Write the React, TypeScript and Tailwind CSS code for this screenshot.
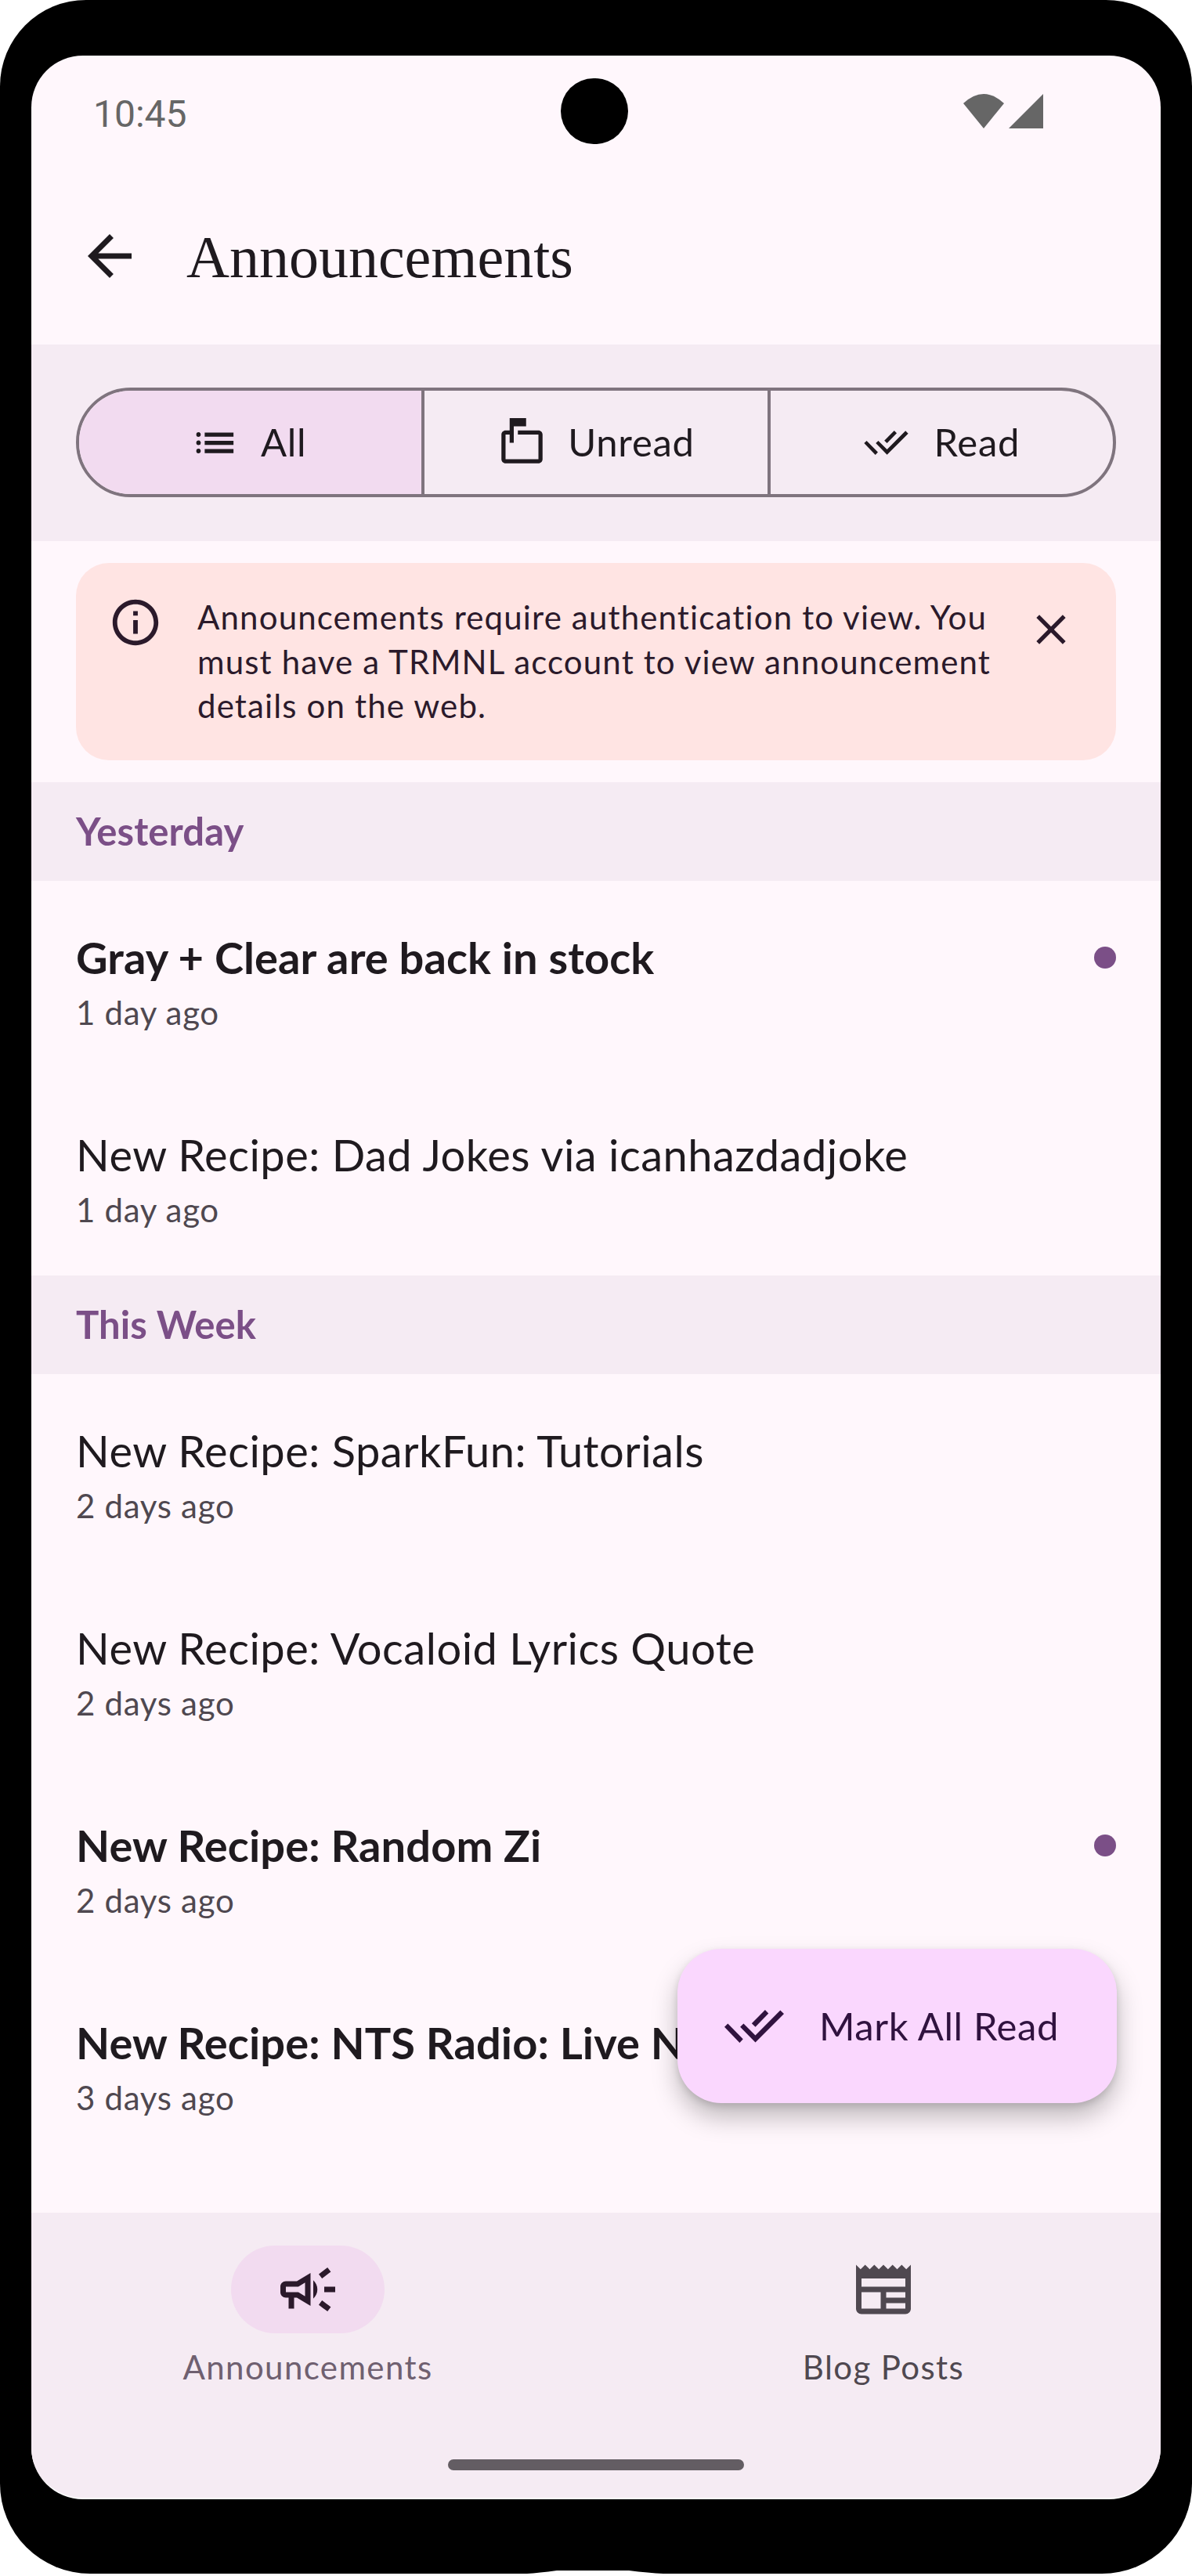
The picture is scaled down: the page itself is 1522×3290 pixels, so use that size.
import React from 'react';

const paths = {
  back: 'M20 11H7.83l5.59-5.59L12 4l-8 8 8 8 1.41-1.41L7.83 13H20v-2z',
  mailbox:
    'M20 6H10v2h10v12H4V8h2v4h2V4h6V0H6v6H4c-1.1 0-2 .9-2 2v12c0 1.1.9 2 2 2h16c1.1 0 2-.9 2-2V8c0-1.1-.9-2-2-2z',
  info: 'M11 7h2v2h-2zm0 4h2v6h-2zm1-9C6.48 2 2 6.48 2 12s4.48 10 10 10 10-4.48 10-10S17.52 2 12 2zm0 18c-4.41 0-8-3.59-8-8s3.59-8 8-8 8 3.59 8 8-3.59 8-8 8z',
  close:
    'M19 6.41L17.59 5 12 10.59 6.41 5 5 6.41 10.59 12 5 17.59 6.41 19 12 13.41 17.59 19 19 17.59 13.41 12z',
  campaign:
    'M18 11v2h4v-2h-4zm-2 6.61c.96.71 2.21 1.65 3.2 2.39.4-.53.8-1.07 1.2-1.6-.99-.74-2.24-1.68-3.2-2.4-.4.54-.8 1.08-1.2 1.61zM20.4 5.6c-.4-.53-.8-1.07-1.2-1.6-.99.74-2.24 1.68-3.2 2.4.4.53.8 1.07 1.2 1.6.96-.72 2.21-1.65 3.2-2.4zM4 9c-1.1 0-2 .9-2 2v2c0 1.1.9 2 2 2h1v4h2v-4h1l5 3V6L8 9H4zm5.03 1.71L11 9.53v4.94l-1.97-1.18-.48-.29H4v-2h4.55l.48-.29zM15.5 12c0-1.33-.58-2.53-1.5-3.35v6.69c.92-.81 1.5-2.01 1.5-3.34z',
  newspaper:
    'M22 3l-1.67 1.67L18.67 3 17 4.67 15.33 3l-1.66 1.67L12 3l-1.67 1.67L8.67 3 7 4.67 5.33 3 3.67 4.67 2 3v16c0 1.1.9 2 2 2h16c1.1 0 2-.9 2-2V3zM11 19H4v-6h7v6zm9 0h-7v-2h7v2zm0-4h-7v-2h7v2zm0-4H4V8h16v3z',
};

function Icon({ d, className }: { d: string; className: string }) {
  return (
    <svg viewBox="0 0 24 24" fill="currentColor" className={className}>
      <path d={d} />
    </svg>
  );
}

function ListIcon({ className }: { className: string }) {
  return (
    <svg viewBox="0 0 24 24" fill="currentColor" className={className}>
      <circle cx="4" cy="8" r="1.1" />
      <circle cx="4" cy="12" r="1.1" />
      <circle cx="4" cy="16" r="1.1" />
      <path d="M7 7h14v2H7zM7 11h14v2H7zM7 15h14v2H7z" />
    </svg>
  );
}

function DoneAll({ className }: { className: string }) {
  return (
    <svg viewBox="72 81 227 125" fill="currentColor" className={className}>
      <path d="M85 133L143 192L130 206L72 146Z" />
      <path d="M145 133L190 178L285 82L299 96L190 205L132 146Z" />
      <path d="M227 81L240 94L190 146L176 132Z" />
    </svg>
  );
}

function SectionHeader({ label }: { label: string }) {
  return (
    <div className="flex h-[126px] items-center bg-[#f5ebf3] pl-[57px] text-[49px] font-bold tracking-[0.1px] text-[#7b4f87]">
      {label}
    </div>
  );
}

function ListRow({ title, age, unread }: { title: string; age: string; unread?: boolean }) {
  return (
    <div className="flex h-[252px] items-start justify-between px-[57px] pt-[67px]">
      <div>
        <div
          className={`text-[56px] leading-[62px] whitespace-nowrap text-[#1f1a1f] ${
            unread ? 'font-bold tracking-[0.1px]' : 'tracking-[0.5px]'
          }`}
        >
          {title}
        </div>
        <div className="mt-[10px] text-[42px] leading-[58px] tracking-[0.7px] text-[#4f4850]">{age}</div>
      </div>
      {unread && <div className="mt-[17px] h-[28px] w-[28px] shrink-0 rounded-full bg-[#7b4f87]" />}
    </div>
  );
}

export default function App() {
  return (
    <div className="relative h-[3290px] w-[1522px] bg-white font-[Lato,sans-serif]">
      <div className="h-[3287px] rounded-t-[110px] rounded-b-[115px] bg-black px-[40px] pt-[71px]">
        <div className="flex h-[3121px] flex-col overflow-hidden rounded-[66px] border-b-2 border-white bg-[#fff7fc]">
          {/* status bar */}
          <div className="relative flex h-[179px] shrink-0 items-start justify-between pt-[51px] pr-[150px] pl-[79px]">
            <span className="font-[Roboto,sans-serif] text-[48px] leading-[48px] text-[#666666]">10:45</span>
            <div className="absolute top-[29px] left-[676px] h-[84px] w-[86px] rounded-full bg-black" />
            <svg viewBox="0 0 102 44" fill="#666666" className="-mt-[2px] h-[44px] w-[102px]">
              <path d="M0 12 Q26 -12 52 12 L26 44 Z" />
              <path d="M58 44 L102 0 V44 Z" />
            </svg>
          </div>

          {/* title row */}
          <div className="flex h-[190px] shrink-0 items-start pt-[35px] pl-[58px]">
            <Icon d={paths.back} className="h-[84px] w-[84px] text-[#1f1a1f]" />
            <h1 className="mt-[1px] ml-[56px] font-['Liberation_Serif',serif] text-[76px] leading-[84px] font-normal text-[#1f1a1f]">
              Announcements
            </h1>
          </div>

          {/* filter */}
          <div className="flex h-[251px] shrink-0 items-start bg-[#f5ebf3] px-[57px] pt-[55px]">
            <div className="flex h-[140px] w-full overflow-hidden rounded-full border-4 border-[#7f747e] text-[49px] tracking-[0.7px] text-[#1f1a1f]">
              <div className="flex flex-1 items-center justify-center gap-[27px] border-r-4 border-[#7f747e] bg-[#f2dbf0]">
                <ListIcon className="h-[63px] w-[63px]" />
                <span className="mr-[5px]">All</span>
              </div>
              <div className="flex flex-1 items-center justify-center gap-[27px] border-r-4 border-[#7f747e]">
                <Icon d={paths.mailbox} className="h-[63px] w-[63px]" />
                Unread
              </div>
              <div className="flex flex-1 items-center justify-center gap-[33px]">
                <DoneAll className="h-[31px] w-[57px]" />
                Read
              </div>
            </div>
          </div>

          {/* auth banner */}
          <div className="shrink-0 px-[57px] py-[28px]">
            <div className="flex h-[252px] items-start rounded-[42px] bg-[#ffe4e3] pt-[41px] pl-[41px] text-[#2b1a2b]">
              <Icon d={paths.info} className="h-[70px] w-[70px] shrink-0" />
              <p className="ml-[44px] w-[1040px] text-[42px] leading-[56.5px] tracking-[1.15px]">
                Announcements require authentication to view. You must have a TRMNL account to view announcement details on the web.
              </p>
              <Icon d={paths.close} className="mt-[12px] ml-[18px] h-[64px] w-[64px] shrink-0" />
            </div>
          </div>

          {/* list */}
          <div className="relative flex-1">
            <SectionHeader label="Yesterday" />
            <ListRow title="Gray + Clear are back in stock" age="1 day ago" unread />
            <ListRow title="New Recipe: Dad Jokes via icanhazdadjoke" age="1 day ago" />
            <SectionHeader label="This Week" />
            <ListRow title="New Recipe: SparkFun: Tutorials" age="2 days ago" />
            <ListRow title="New Recipe: Vocaloid Lyrics Quote" age="2 days ago" />
            <ListRow title="New Recipe: Random Zi" age="2 days ago" unread />
            <ListRow title="New Recipe: NTS Radio: Live N" age="3 days ago" unread />

            <div className="absolute right-[56px] bottom-[140px] flex h-[197px] w-[561px] items-center rounded-[56px] bg-[#fad7fe] pl-[60px] text-[49px] tracking-[0.6px] text-[#30123f] shadow-[0_18px_32px_rgba(0,0,0,0.25),0_4px_10px_rgba(0,0,0,0.12)]">
              <DoneAll className="h-[42px] w-[76px] shrink-0" />
              <span className="ml-[45px] whitespace-nowrap">Mark All Read</span>
            </div>
          </div>

          {/* bottom nav */}
          <div className="relative h-[364px] shrink-0 bg-[#f5ebf3] pt-[42px]">
            <div className="flex gap-[335px] pl-[153px]">
              <div className="flex w-[400px] flex-col items-center">
                <div className="flex h-[112px] w-[196px] items-center justify-center rounded-full bg-[#f2dbf0] text-[#2b1a2b]">
                  <Icon d={paths.campaign} className="h-[84px] w-[84px]" />
                </div>
                <span className="mt-[14px] text-[42px] leading-[58px] tracking-[1.4px] text-[#6f6070]">Announcements</span>
              </div>
              <div className="flex w-[400px] flex-col items-center">
                <div className="flex h-[112px] w-[196px] items-center justify-center text-[#4f4850]">
                  <Icon d={paths.newspaper} className="h-[84px] w-[84px]" />
                </div>
                <span className="mt-[14px] text-[42px] leading-[58px] tracking-[1.4px] text-[#4f4850]">Blog Posts</span>
              </div>
            </div>
            <div className="absolute top-[315px] left-[532px] h-[14px] w-[378px] rounded-full bg-[#635d63]" />
          </div>
        </div>
      </div>
      <svg viewBox="0 0 174 7" fill="white" className="absolute bottom-0 left-[673px] h-[7px] w-[174px]">
        <path d="M0 4 Q15 3 38 0 H130 Q155 3 174 4 V7 H0 Z" />
      </svg>
    </div>
  );
}
